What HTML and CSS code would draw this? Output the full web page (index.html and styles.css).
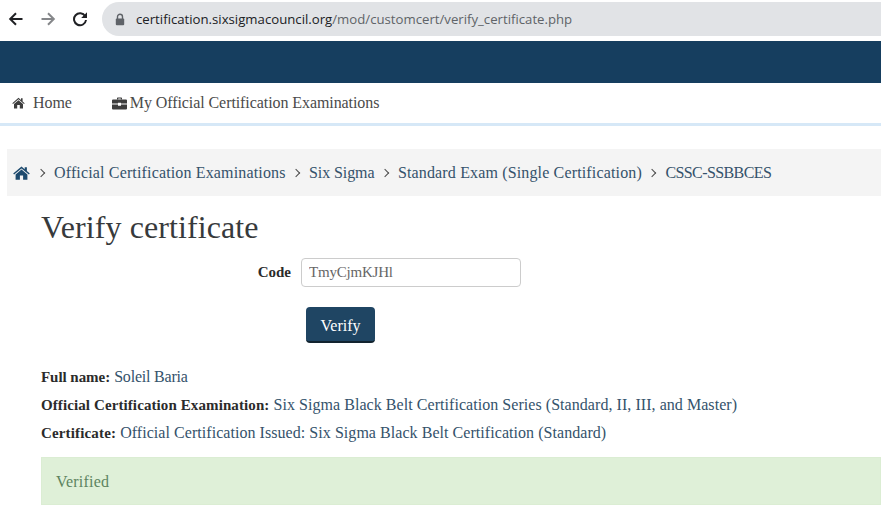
FILE: index.html
```html
<!DOCTYPE html>
<html lang="en">
<head>
    <meta charset="UTF-8">
    <meta name="viewport" content="width=device-width, initial-scale=1.0">
    <title>Verify certificate</title>
    <link rel="stylesheet" href="styles.css">
</head>
<body>
    <div class="browser-bar">
        <svg class="tool-icon back" width="16" height="16" viewBox="0 0 16 16"><path d="M14.5 8H2.5M8 2.2L2.2 8L8 13.8" fill="none" stroke="#202124" stroke-width="2"/></svg>
        <svg class="tool-icon forward" width="16" height="16" viewBox="0 0 16 16"><path d="M1.5 8H13.5M8 2.2L13.8 8L8 13.8" fill="none" stroke="#85878a" stroke-width="2"/></svg>
        <svg class="tool-icon reload" width="16" height="16" viewBox="0 0 16 16"><path d="M13.2 5.2A6 6 0 1 0 14 9" fill="none" stroke="#202124" stroke-width="2"/><path d="M15 1.2V7H9.2Z" fill="#202124"/></svg>
        <div class="address">
            <svg class="lock" width="10" height="13" viewBox="0 0 10 13"><path d="M2.5 6V3.8a2.5 2.5 0 0 1 5 0V6" fill="none" stroke="#5f6368" stroke-width="1.4"/><rect x="0.8" y="5.5" width="8.4" height="6.8" rx="1" fill="#5f6368"/></svg>
            <span class="host">certification.sixsigmacouncil.org</span><span class="path">/mod/customcert/verify_certificate.php</span>
        </div>
    </div>
    <div class="top-band"></div>
    <nav class="main-nav">
        <a class="nav-link home-link">
            <svg width="13" height="12" viewBox="0 0 13 12"><path d="M6.5 0.8L0.3 6.2L1 7L6.5 2.3L12 7L12.7 6.2L10.6 4.4V1.2H9V3L6.5 0.8ZM6.5 3.2L2 7V11.5H5.2V8H7.8V11.5H11V7Z" fill="#3d3d3d"/></svg>
            <span>Home</span>
        </a>
        <a class="nav-link exams-link">
            <svg width="15" height="13" viewBox="0 0 15 13"><path d="M5 2.5V1.2Q5 .5 5.7 .5H9.3Q10 .5 10 1.2V2.5H8.8V1.6H6.2V2.5Z" fill="#3d3d3d"/><path d="M1 2.5H14Q15 2.5 15 3.5V6.6H9V5.8H6V6.6H0V3.5Q0 2.5 1 2.5ZM0 7.6H6V8.8H9V7.6H15V11.5Q15 12.5 14 12.5H1Q0 12.5 0 11.5Z" fill="#3d3d3d"/></svg>
            <span>My Official Certification Examinations</span>
        </a>
    </nav>
    <div class="breadcrumb">
        <svg class="crumb-home" width="17" height="14" viewBox="0 0 17 14"><path d="M8.5 0.4L0.2 7.4L1.1 8.5L8.5 2.4L15.9 8.5L16.8 7.4L13.9 5V1.2H11.7V3.2ZM8.5 3.6L2.6 8.5V13.8H6.9V9.6H10.1V13.8H14.4V8.5Z" fill="#1d4a6e"/></svg>
        <span class="sep"></span>
        <a>Official Certification Examinations</a>
        <span class="sep"></span>
        <a class="crumb-short">Six Sigma</a>
        <span class="sep"></span>
        <a>Standard Exam (Single Certification)</a>
        <span class="sep"></span>
        <a class="crumb-code">CSSC-SSBBCES</a>
    </div>
    <main class="content">
        <h1>Verify certificate</h1>
        <form class="verify-form">
            <div class="form-row">
                <label for="code">Code</label>
                <input id="code" type="text" value="TmyCjmKJHl">
            </div>
            <button type="button">Verify</button>
        </form>
        <p class="detail"><b class="name-label">Full name:</b> <a class="name">Soleil Baria</a></p>
        <p class="detail"><b>Official Certification Examination:</b> Six Sigma Black Belt Certification Series (Standard, II, III, and Master)</p>
        <p class="detail"><b class="cert-label">Certificate:</b> Official Certification Issued: Six Sigma Black Belt Certification (Standard)</p>
        <div class="alert-success">Verified</div>
    </main>
</body>
</html>
```

FILE: styles.css
```css
html, body {
    height: 100%;
    overflow: hidden;
}
body {
    margin: 0;
    background: #fff;
    font-family: "Liberation Serif", serif;
    font-size: 16px;
    color: #373a3c;
}
.browser-bar {
    display: flex;
    align-items: center;
    height: 34px;
    padding: 2px 0 5px 8px;
    background: #fff;
}
.tool-icon {
    flex: none;
}
.forward {
    margin-left: 16px;
}
.reload {
    margin-left: 16px;
}
.address {
    display: flex;
    align-items: center;
    flex: 1;
    height: 34px;
    margin-left: 14px;
    padding-left: 13px;
    background: #e1e3e6;
    border-radius: 17px 0 0 17px;
    font-family: "Open Sans", sans-serif;
    font-size: 13.2px;
    white-space: nowrap;
}
.lock {
    margin-right: 11px;
}
.host {
    color: #202124;
}
.path {
    color: #5f6368;
}
.top-band {
    height: 42px;
    background: #163e5f;
}
.main-nav {
    display: flex;
    align-items: center;
    height: 40px;
    padding-left: 12px;
    border-bottom: 3px solid #d6e8f7;
    font-size: 16px;
    letter-spacing: -0.08px;
    color: #4a4a4a;
}
.nav-link {
    display: flex;
    align-items: center;
}
.home-link span {
    margin-left: 8px;
}
.exams-link {
    margin-left: 40px;
}
.exams-link span {
    margin-left: 3px;
}
.breadcrumb {
    display: flex;
    align-items: center;
    height: 47px;
    margin: 23px 0 0 7px;
    padding-left: 6px;
    background: #f4f4f4;
    font-size: 16px;
    letter-spacing: 0.15px;
    color: #34526b;
    white-space: nowrap;
}
.crumb-home {
    margin-right: 0.5px;
}
.sep {
    width: 5px;
    height: 5px;
    margin: 0 10.25px 0 7.25px;
    border-top: 1.5px solid #4a4a4a;
    border-right: 1.5px solid #4a4a4a;
    transform: rotate(45deg);
}
.crumb-short {
    letter-spacing: -0.1px;
}
.crumb-code {
    letter-spacing: -0.6px;
}
.content {
    padding-left: 41px;
}
h1 {
    margin: 14px 0 0;
    font-size: 32px;
    font-weight: 400;
    line-height: 34px;
    letter-spacing: 0.1px;
    color: #373a3c;
}
.form-row {
    display: flex;
    align-items: center;
    margin-top: 14px;
}
.form-row label {
    width: 260px;
    padding-right: 10px;
    box-sizing: border-box;
    text-align: right;
    font-weight: 700;
    font-size: 15px;
    color: #2b2b2b;
}
.form-row input {
    width: 220px;
    height: 29px;
    box-sizing: border-box;
    padding: 0 7px;
    border: 1px solid #ccc;
    border-radius: 4px;
    font-family: inherit;
    font-size: 15px;
    letter-spacing: -0.2px;
    color: #666;
}
.verify-form button {
    display: block;
    width: 69px;
    height: 36px;
    margin: 20px 0 0 265px;
    padding: 3px 0 0;
    border: none;
    border-bottom: 2px solid #12242f;
    border-radius: 4px;
    background: #1f4563;
    color: #fff;
    font-family: inherit;
    font-size: 16px;
}
.detail {
    margin: 0;
    height: 28px;
    line-height: 28px;
    font-size: 16px;
    letter-spacing: 0.05px;
    color: #34526b;
    white-space: nowrap;
}
.verify-form + .detail {
    margin-top: 20px;
}
.detail b {
    font-size: 15px;
    letter-spacing: 0.1px;
    color: #2b2b2b;
}
.detail .name-label {
    letter-spacing: -0.05px;
}
.detail .cert-label {
    letter-spacing: 0.15px;
}
.detail .name {
    letter-spacing: -0.2px;
}
.alert-success {
    margin-top: 10px;
    height: 48px;
    line-height: 47px;
    box-sizing: border-box;
    padding-left: 14px;
    border: 1px solid #dbedd3;
    background: #dff0d8;
    color: #5d8460;
    font-size: 16px;
    letter-spacing: 0.2px;
}
```
